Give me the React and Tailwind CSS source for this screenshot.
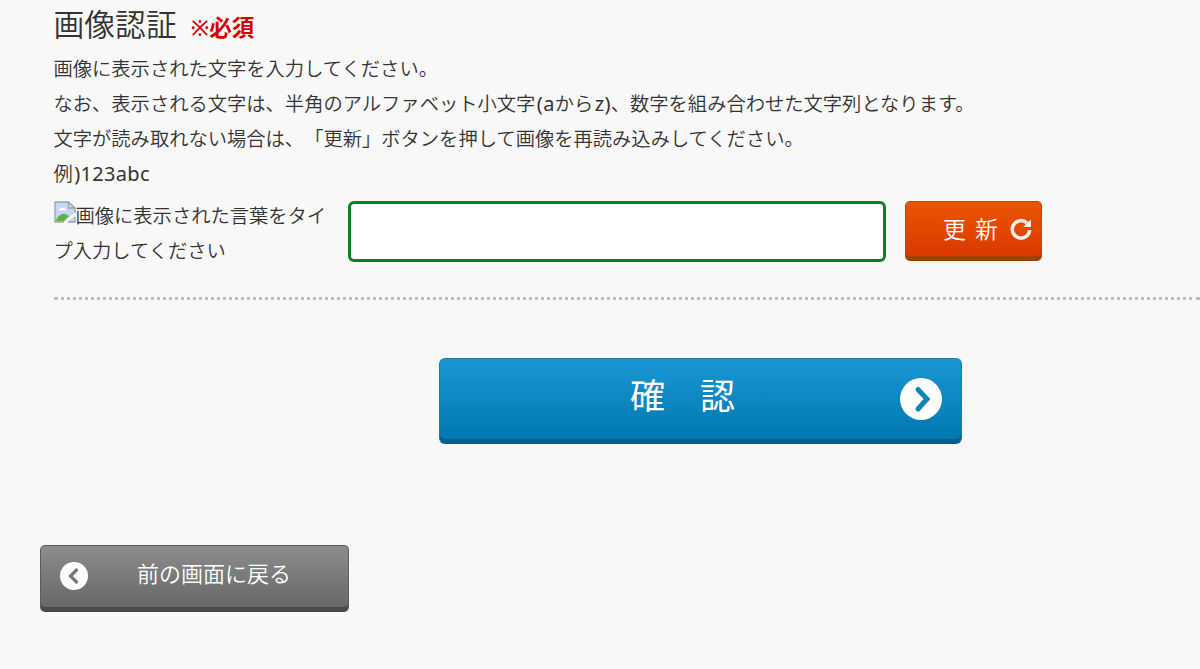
import { useState } from "react";

const notes = [
    <>画像に表示された文字を入力してください。</>,
    <>
        なお、表示される文字は、半角のアルファベット小文字<Latin>(a</Latin>
        から<Latin>z)</Latin>、数字を組み合わせた文字列となります。
    </>,
    <>文字が読み取れない場合は、「更新」ボタンを押して画像を再読み込みしてください。</>,
    <>
        例<Latin>)123abc</Latin>
    </>,
];

function Latin({ children }) {
    return (
        <span className="ml-[1.5px] text-[20px] font-normal tracking-[0.3px]">
            {children}
        </span>
    );
}

function BrokenImageIcon() {
    return (
        <svg
            className="inline-block w-[22px] h-[22px] align-[0px]"
            viewBox="0 0 22 22"
        >
            <path d="M1 1h13.5l6.5 6V21H1z" fill="#c5d7f5" />
            <path
                d="M5 9a2.5 2.5 0 0 1 4-2 2.5 2.5 0 0 1 3 2.5H5z"
                fill="#fff"
            />
            <path d="M2 20c1-5 6-8 9-7s4 2 4 2l-5 5z" fill="#5bb342" />
            <path d="M21 11L10 21h3.5L21 14.500z" fill="#f7f7f7" />
            <path
                d="M10 21H1V1h13.500l6.500 6v5M14.500 1v6H21M14 21h7v-5"
                fill="none"
                stroke="#a2a2a2"
                strokeWidth="1.300"
            />
        </svg>
    );
}

function RefreshIcon() {
    return (
        <svg className="w-[22px] h-[22px]" viewBox="0 0 22 22">
            <path
                d="M17 5A8.700 8.700 0 1 0 19.700 12"
                fill="none"
                stroke="#fff0e8"
                strokeWidth="3.500"
            />
            <path d="M21 1.500v7.500h-8z" fill="#fff0e8" />
        </svg>
    );
}

export default function App() {
    const [answer, setAnswer] = useState("");

    return (
        <div className="h-[669px] overflow-hidden bg-[#f8f8f8] text-[#333] text-[19.3px] font-[350] leading-[35px] [text-spacing-trim:space-all] font-['Noto_Sans','Noto_Sans_CJK_JP',sans-serif]">
            <div className="pl-[53.5px]">
                <h2 className="h-[51px] leading-[48px] text-[30.8px] whitespace-nowrap">
                    画像認証
                    <span className="ml-[14px] text-[22px] font-bold text-[#d90000]">
                        <span className="font-medium">※</span>
                        <span className="text-[22.5px]">必須</span>
                    </span>
                </h2>
                <div className="whitespace-nowrap">
                    {notes.map((note, i) => (
                        <p key={i}>{note}</p>
                    ))}
                </div>

                <div className="flex items-start h-[97px] pt-[10px]">
                    <p className="w-[275px] mr-[19.5px] -mt-[3px]">
                        <BrokenImageIcon />
                        画像に表示された言葉をタイプ入力してください
                    </p>
                    <input
                        type="text"
                        value={answer}
                        onChange={(e) => setAnswer(e.target.value)}
                        className="w-[537.5px] h-[61px] mr-[19.5px] px-3 bg-white border-3 border-[#078322] rounded-[6px] outline-none"
                    />
                    <button className="flex items-center w-[137px] h-[60px] pl-[37px] pb-[4px] rounded-[5px] border border-[#ae4a12] border-b-[#8c3c00] bg-linear-to-b from-[#eb5500] to-[#d93600] shadow-[inset_0_-4px_0_#9d4000] text-white text-[23px]">
                        <span className="tracking-[9px]">更新</span>
                        <span className="ml-[3px] shrink-0">
                            <RefreshIcon />
                        </span>
                    </button>
                </div>
            </div>

            <div className="ml-[54px] mt-[9px] border-t-3 border-dotted border-[#bdbdbd]" />

            <button className="relative block w-[523px] h-[86px] ml-[439px] mt-[58px] pb-[11px] rounded-[6px] border border-[#287899] border-b-[#075f8d] bg-linear-to-b from-[#1997d4] to-[#0076ae] shadow-[inset_0_-4px_0_#005f8e] text-white text-[35px] font-normal">
                <span className="block -translate-x-[18px]">確　認</span>
                <svg
                    className="absolute right-[19px] top-[19px] w-[42px] h-[42px]"
                    viewBox="0 0 42 42"
                >
                    <circle cx="21" cy="21" r="21" fill="#fff" />
                    <path
                        d="M18 11.500L27 21l-9 10"
                        fill="none"
                        stroke="#0f84bc"
                        strokeWidth="5"
                        strokeLinecap="round"
                    />
                </svg>
            </button>

            <button className="flex items-start w-[309px] h-[67px] ml-[40px] mt-[101px] pl-[19px] rounded-[5px] border border-[#5c5c5c] border-b-[#444] bg-linear-to-b from-[#8d8d8d] to-[#656565] shadow-[inset_0_-4px_0_#4b4b4b] text-white text-[22px]">
                <svg
                    className="w-[28px] h-[28px] mt-[16px] mr-[49px] shrink-0"
                    viewBox="0 0 28 28"
                >
                    <circle cx="14" cy="14" r="14" fill="#fff" />
                    <path
                        d="M16.500 8l-6 6 6 6"
                        fill="none"
                        stroke="#777"
                        strokeWidth="3.200"
                        strokeLinecap="round"
                    />
                </svg>
                <span className="mt-[10px]">前の画面に戻る</span>
            </button>
        </div>
    );
}
